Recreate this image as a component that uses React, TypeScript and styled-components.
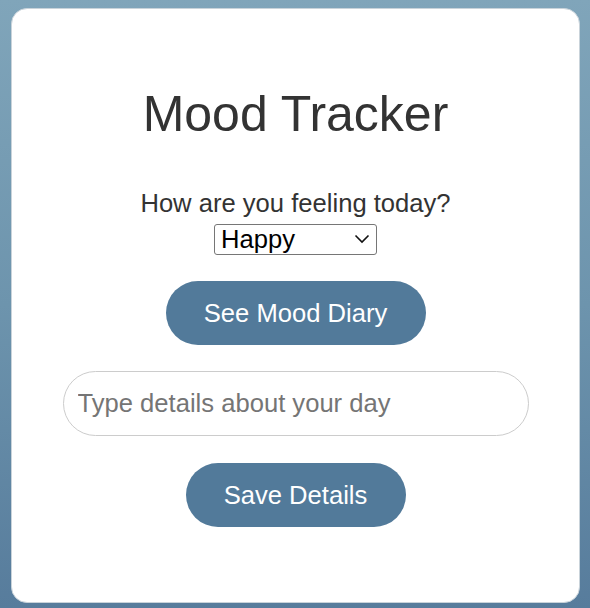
import React from "react";
import styled, { createGlobalStyle } from "styled-components";

const Global = createGlobalStyle`
  html, body { margin: 0; padding: 0; }
  body {
    font-family: "Liberation Sans", Arial, Helvetica, sans-serif;
    background: linear-gradient(to bottom, #80a5ba 0%, #6d94ad 50%, #577c9c 100%);
    min-height: 608px;
  }
  * { box-sizing: border-box; }
`;

const Page = styled.div`
  height: 608px;
  padding: 8px 10px 5px 11px;
  display: flex;
`;

const Card = styled.div`
  flex: 1;
  background: #ffffff;
  border: 1px solid #c9d3da;
  border-radius: 16px;
  display: flex;
  flex-direction: column;
  align-items: center;
  padding-top: 77px;
`;

const Title = styled.h1`
  margin: 0;
  font-size: 50px;
  font-weight: 400;
  color: #333333;
  line-height: 57px;
`;

const Question = styled.label`
  margin-top: 45px;
  font-size: 25.6px;
  color: #333333;
  line-height: 30px;
`;

const SelectWrap = styled.div`
  position: relative;
  margin-top: 6px;
  width: 163px;
  height: 31px;
`;

const Select = styled.select`
  appearance: none;
  width: 100%;
  height: 100%;
  border: 1px solid #767676;
  border-radius: 3px;
  background: #ffffff;
  font-family: inherit;
  font-size: 25.6px;
  color: #000000;
  padding: 0 0 0 6px;
  line-height: 29px;
  outline: none;
`;

const Chevron = styled.svg`
  position: absolute;
  right: 7px;
  top: 10px;
  pointer-events: none;
`;

const PillButton = styled.button<{ $width: number; $top: number }>`
  margin-top: ${(p) => p.$top}px;
  width: ${(p) => p.$width}px;
  height: 64px;
  border: none;
  border-radius: 32px;
  background: #527a9a;
  color: #ffffff;
  font-family: inherit;
  font-size: 25.6px;
  cursor: pointer;
`;

const DetailsInput = styled.input`
  margin-top: 26px;
  width: 466px;
  height: 65px;
  border: 1px solid #cccccc;
  border-radius: 33px;
  padding: 0 14px;
  font-family: inherit;
  font-size: 25.6px;
  color: #333333;
  outline: none;
  &::placeholder {
    color: #757575;
  }
`;

export default function App() {
  return (
    <>
      <Global />
      <Page>
        <Card>
          <Title>Mood Tracker</Title>
          <Question htmlFor="mood">How are you feeling today?</Question>
          <SelectWrap>
            <Select id="mood" defaultValue="Happy">
              <option>Happy</option>
              <option>Sad</option>
              <option>Angry</option>
              <option>Calm</option>
            </Select>
            <Chevron width="16" height="10" viewBox="0 0 16 10">
              <path d="M1.5 1.5 L8 8 L14.5 1.5" fill="none" stroke="#111" strokeWidth="1.6" />
            </Chevron>
          </SelectWrap>
          <PillButton $width={260} $top={26}>See Mood Diary</PillButton>
          <DetailsInput placeholder="Type details about your day" />
          <PillButton $width={220} $top={27}>Save Details</PillButton>
        </Card>
      </Page>
    </>
  );
}
